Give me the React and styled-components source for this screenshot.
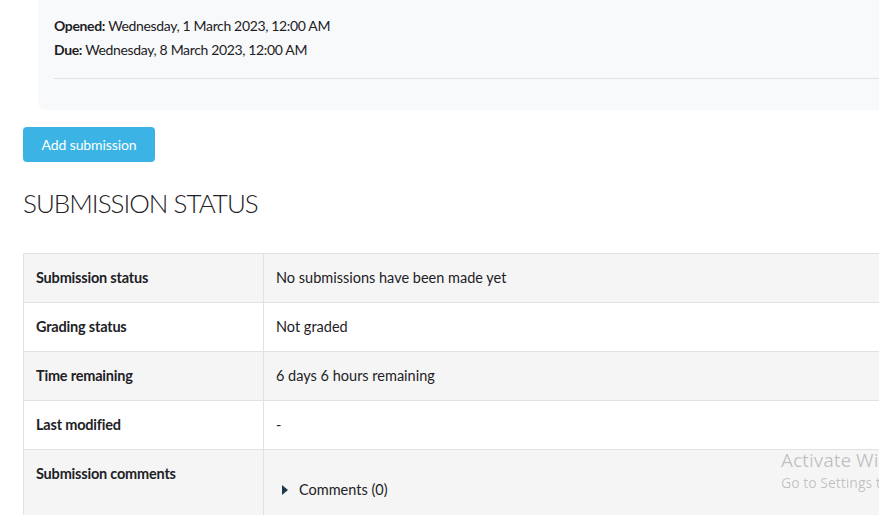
import React from "react";
import styled, { createGlobalStyle } from "styled-components";

const Global = createGlobalStyle`
  html, body { margin: 0; padding: 0; background: #fff; overflow: hidden; }
  body { font-family: Lato, "Open Sans", sans-serif; color: #1d2125; }
`;

const Page = styled.div`
  position: relative;
  width: 879px;
  height: 515px;
  overflow: hidden;
  padding-left: 23px;
  box-sizing: border-box;
`;

const DatesPanel = styled.div`
  margin-left: 15px;
  margin-right: -20px;
  background: #f8f9fa;
  border-bottom-left-radius: 8px;
  padding: 14px 0 31px 16px;
`;

const DateLine = styled.div`
  font-size: 14px;
  line-height: 24px;
  letter-spacing: -0.35px;
  b { font-weight: 700; }
`;

const Rule = styled.hr`
  border: 0;
  border-top: 1px solid #dee2e6;
  margin: 16px 0 0 0;
`;

const Button = styled.button`
  margin-top: 17px;
  width: 132px;
  height: 35px;
  border: 0;
  border-radius: 4px;
  background: #3bb4e5;
  color: #fff;
  font-family: Lato, sans-serif;
  font-size: 14px;
  letter-spacing: -0.1px;
  padding: 0;
  display: block;
`;

const Heading = styled.h2`
  margin: 24px 0 0 0;
  font-weight: 300;
  font-size: 26px;
  line-height: 34px;
  letter-spacing: -1px;
  color: #1d2125;
`;

const Table = styled.div`
  margin-top: 33px;
  margin-right: -20px;
  border-top: 1px solid #dee2e6;
  border-left: 1px solid #dee2e6;
`;

const Row = styled.div`
  display: grid;
  grid-template-columns: 240px 1fr;
  background: ${(p) => (p.$striped ? "#f5f5f5" : "#fff")};
  border-bottom: 1px solid #dee2e6;
  height: ${(p) => p.$h || 48}px;
`;

const Label = styled.div`
  padding: 12px 12px;
  font-weight: 700;
  font-size: 14.5px;
  line-height: 24px;
  letter-spacing: -0.2px;
  border-right: 1px solid #dee2e6;
`;

const Value = styled.div`
  padding: 12px 12px;
  font-size: 14.5px;
  line-height: 24px;
  letter-spacing: 0;
`;

const Toggle = styled.div`
  display: flex;
  align-items: center;
  gap: 11px;
  margin-top: 16px;
  padding-left: 6px;
`;

const Watermark = styled.div`
  position: absolute;
  left: 781px;
  top: 448px;
  font-family: "Open Sans", sans-serif;
  color: rgba(0, 0, 0, 0.22);
  white-space: nowrap;
  div:first-child { font-size: 19px; line-height: 24px; }
  div:last-child { font-size: 14px; line-height: 20px; margin-top: 1px; }
`;

const rows = [
  ["Submission status", "No submissions have been made yet"],
  ["Grading status", "Not graded"],
  ["Time remaining", "6 days 6 hours remaining"],
  ["Last modified", "-"],
];

export default function App() {
  return (
    <>
      <Global />
      <Page>
        <DatesPanel>
          <DateLine>
            <b>Opened:</b> Wednesday, 1 March 2023, 12:00 AM
          </DateLine>
          <DateLine>
            <b>Due:</b> Wednesday, 8 March 2023, 12:00 AM
          </DateLine>
          <Rule />
        </DatesPanel>
        <Button>Add submission</Button>
        <Heading>SUBMISSION STATUS</Heading>
        <Table>
          {rows.map(([l, v], i) => (
            <Row key={l} $striped={i % 2 === 0}>
              <Label>{l}</Label>
              <Value>{v}</Value>
            </Row>
          ))}
          <Row $striped $h={80}>
            <Label>Submission comments</Label>
            <Value>
              <Toggle>
                <svg width="6" height="10" viewBox="0 0 6 10">
                  <path d="M0 0 L6 5 L0 10 Z" fill="#1d3a4d" />
                </svg>
                <span>Comments (0)</span>
              </Toggle>
            </Value>
          </Row>
        </Table>
        <Watermark>
          <div>Activate Windows</div>
          <div>Go to Settings to activate Windows.</div>
        </Watermark>
      </Page>
    </>
  );
}
